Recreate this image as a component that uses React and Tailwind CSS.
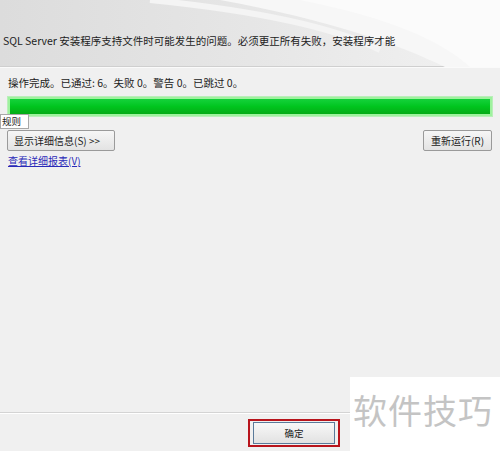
export default function App() {
  const font = { fontFamily: '"Noto Sans CJK SC", "Liberation Sans", sans-serif' }
  return (
    <div className="relative flex flex-col w-[500px] h-[451px] overflow-hidden bg-[#f0f0f0] text-[#222]" style={font}>
      {/* header */}
      <div className="relative h-[67px] shrink-0 flex items-end pb-[19px] pl-[3px] bg-gradient-to-r from-[#dcdcdc] via-[#e6e6e6] to-[#f2f2f2] border-b border-[#cfcfcf]">
        <svg className="absolute inset-0" width="500" height="67" viewBox="0 0 500 67">
          <path d="M220 0 C330 20 400 45 445 67 L500 67 L500 0 Z" fill="#f7f7f7" />
          <path d="M300 0 C390 18 440 40 470 67 L500 67 L500 0 Z" fill="#fbfbfb" />
          <path d="M150 0 C250 10 330 25 380 50" stroke="#f4f4f4" strokeWidth="6" fill="none" />
        </svg>
        <p className="relative text-[10.5px] leading-[12px] whitespace-nowrap">
          SQL Server 安装程序支持文件时可能发生的问题。必须更正所有失败，安装程序才能
        </p>
      </div>
      <div className="h-px shrink-0 bg-[#fafafa]" />

      <div className="relative flex-1 flex flex-col items-start px-[7px]">
        <p className="pl-px pt-[8px] text-[10.5px] leading-[13px] whitespace-nowrap">
          操作完成。已通过: 6。失败 0。警告 0。已跳过 0。
        </p>
        <div className="mt-[7px] h-[21px] w-[486px] border border-[#b9efb9] bg-[#9ef29e] p-[2px]">
          <div className="h-full bg-gradient-to-b from-[#14d23a] via-[#00c51e] to-[#04ab16]" />
        </div>

        <div className="absolute left-0 top-[46px] h-[15px] w-[29px] border border-[#a8a8a8] bg-white text-[9.5px] leading-[13px] pl-px">
          规则
        </div>

        <div className="mt-[13px] w-full flex items-start justify-between pr-[1px]">
          <button className="h-[21px] w-[108px] border border-[#9a9a9a] rounded-[2px] bg-gradient-to-b from-[#f6f6f6] to-[#e3e3e3] text-[10px] leading-[19px] text-[#222] text-left pl-[6px]">
            显示详细信息(S) &gt;&gt;
          </button>
          <button className="h-[21px] w-[69px] border border-[#9a9a9a] rounded-[2px] bg-gradient-to-b from-[#f6f6f6] to-[#e3e3e3] text-[10px] leading-[19px] text-[#222]">
            重新运行(R)
          </button>
        </div>
        <a className="ml-px mt-[3px] text-[10px] leading-[13px] text-[#2a2ab8] underline">
          查看详细报表(V)
        </a>
      </div>

      {/* footer */}
      <div className="shrink-0 h-px bg-[#d4d4d4]" />
      <div className="shrink-0 h-[38px] border-t border-white flex justify-end items-start pt-[5px] pr-[160px]">
        <div className="h-[28px] w-[92px] border-2 border-[#b8141c] flex items-center justify-center">
          <button className="h-[22px] w-[82px] border border-[#5a7a9a] bg-gradient-to-b from-[#f8f8f8] to-[#e2e2e2] text-[9.5px] text-[#222]">
            确定
          </button>
        </div>
      </div>

      {/* watermark overlay */}
      <div className="absolute right-0 bottom-0 h-[74px] w-[150px] bg-white pl-[3px] pt-[14px]">
        <span className="text-[34px] leading-[38px] text-[#c4c4c4] tracking-[1px]">软件技巧</span>
      </div>
    </div>
  )
}
